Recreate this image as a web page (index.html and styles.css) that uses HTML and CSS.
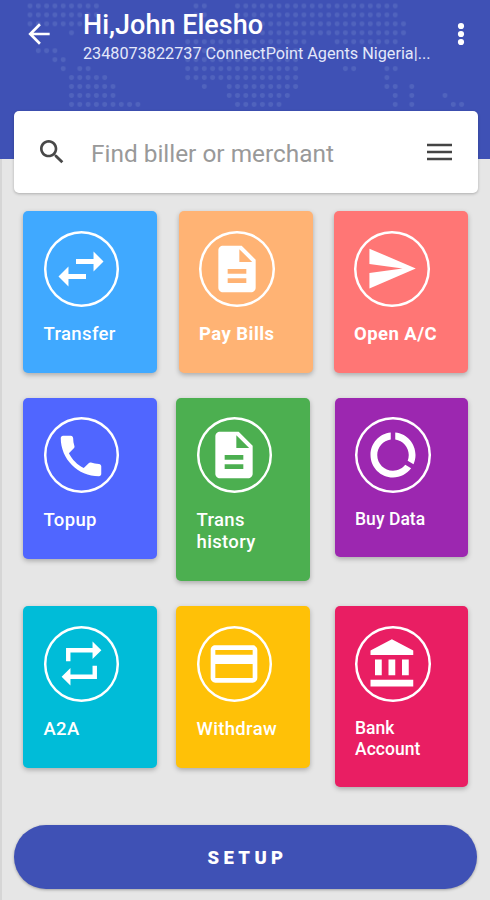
FILE: index.html
```
<!DOCTYPE html>
<html lang="en">
<head>
<meta charset="utf-8">
<title>Agent dashboard</title>
<link rel="stylesheet" href="styles.css">
</head>
<body>
<div class="screen">
  <header class="hero">
    <svg class="map" width="490" height="112" aria-hidden="true">
      <defs>
        <pattern id="dot" x="25.85" y="1.5" width="8.3" height="8.95" patternUnits="userSpaceOnUse">
          <circle cx="4.15" cy="4.5" r="2.4" fill="#5063bd"/>
        </pattern>
        <clipPath id="land">
          <path d="M0 0h9v2H0zM20 0h2v2h-2zM25 0h20v2H25zM0 2h7v1H0zM28 2h18v2H28zM5 3h1v1H5zM19 4h15v1H19zM37 4h8v1h-8zM1 5h3v1H1zM19 5h14v4H19zM3 6h2v1H3zM4 7h1v1H4zM6 7h2v1H6zM38 7h2v1h-2zM43 7h2v1h-2zM5 8h5v1H5zM43 8h1v1h-1zM5 9h6v2H5zM21 9h1v1h-1zM24 9h9v1h-9zM43 9h2v1h-2zM46 9h1v3h-1zM24 10h8v1h-8zM44 10h1v2h-1zM50 10h1v1h-1zM5 11h9v1H5zM25 11h6v1h-6zM51 11h2v1h-2z" transform="translate(25.85 1.5) scale(8.3 8.95)"/>
        </clipPath>
      </defs>
      <rect width="490" height="112" fill="url(#dot)" clip-path="url(#land)"/>
    </svg>
    <div class="bar">
      <svg class="back" viewBox="0 0 24 24"><path d="M20 11H7.83l5.59-5.59L12 4l-8 8 8 8 1.41-1.41L7.83 13H20v-2z"/></svg>
      <div class="who">
        <h1 class="name">Hi,John Elesho</h1>
        <p class="account">2348073822737 ConnectPoint Agents Nigeria|...</p>
      </div>
      <svg class="more" viewBox="0 0 8 24"><circle cx="4" cy="4" r="3.1"/><circle cx="4" cy="12" r="3.1"/><circle cx="4" cy="20" r="3.1"/></svg>
    </div>
  </header>

  <div class="search">
    <svg class="lens" viewBox="0 0 24 24"><path d="M15.5 14h-.79l-.28-.27C15.41 12.59 16 11.11 16 9.5 16 5.91 13.09 3 9.5 3S3 5.91 3 9.5 5.91 16 9.5 16c1.61 0 3.09-.59 4.23-1.57l.27.28v.79l5 4.99L20.49 19l-4.99-5zm-6 0C7.01 14 5 11.99 5 9.5S7.01 5 9.5 5 14 7.01 14 9.5 11.99 14 9.5 14z"/></svg>
    <span class="hint">Find biller or merchant</span>
    <svg class="menu" viewBox="0 0 25 18"><path d="M0 .8h25v2.400H0zM0 7.800h25v2.400H0zM0 14.800h25v2.400H0z"/></svg>
  </div>

  <main class="tiles">
    <div class="row row-first">
      <div class="tile transfer">
        <span class="ring"><svg class="i60" viewBox="0 0 24 24"><path d="M6.99 11L3 15l3.99 4v-3H14v-2H6.99v-3zM21 9l-3.99-4v3H10v2h7.01v3L21 9z"/></svg></span>
        <span class="label">Transfer</span>
      </div>
      <div class="tile bills">
        <span class="ring"><svg class="i56" viewBox="0 0 24 24"><path d="M14 2H6c-1.1 0-1.99.9-1.99 2L4 20c0 1.1.89 2 1.99 2H18c1.1 0 2-.9 2-2V8l-6-6zm2 16H8v-2h8v2zm0-4H8v-2h8v2zm-3-5V3.500L18.500 9H13z"/></svg></span>
        <span class="label heavy">Pay Bills</span>
      </div>
      <div class="tile open">
        <span class="ring"><svg class="i53" viewBox="0 0 24 24"><path d="M2.010 21L23 12 2.010 3 2 10l15 2-15 2z"/></svg></span>
        <span class="label heavy">Open A/C</span>
      </div>
    </div>
    <div class="row row-second">
      <div class="tile topup">
        <span class="ring"><svg class="i54 phone" viewBox="0 0 24 24"><path d="M6.620 10.790c1.440 2.830 3.760 5.140 6.590 6.590l2.200-2.200c.27-.27.67-.36 1.020-.24 1.120.37 2.330.57 3.570.57.550 0 1 .45 1 1V20c0 .55-.45 1-1 1-9.390 0-17-7.610-17-17 0-.55.450-1 1-1h3.500c.55 0 1 .45 1 1 0 1.250.2 2.450.57 3.570.110.35.030.74-.25 1.020l-2.200 2.200z"/></svg></span>
        <span class="label">Topup</span>
      </div>
      <div class="tile history">
        <span class="ring"><svg class="i56" viewBox="0 0 24 24"><path d="M14 2H6c-1.1 0-1.990.9-1.990 2L4 20c0 1.100.89 2 1.990 2H18c1.100 0 2-.9 2-2V8l-6-6zm2 16H8v-2h8v2zm0-4H8v-2h8v2zm-3-5V3.500L18.500 9H13z"/></svg></span>
        <span class="label">Trans<br>history</span>
      </div>
      <div class="tile data">
        <span class="ring"><svg class="i54" viewBox="0 0 24 24"><path d="M13 2.050v3.030c3.390.49 6 3.390 6 6.920 0 .9-.18 1.750-.48 2.540l2.600 1.530c.56-1.240.88-2.620.88-4.070 0-5.180-3.950-9.450-9-9.950zM12 19c-3.870 0-7-3.130-7-7 0-3.530 2.610-6.430 6-6.920V2.050c-5.060.5-9 4.760-9 9.950 0 5.520 4.470 10 9.990 10 3.310 0 6.240-1.610 8.060-4.090l-2.600-1.530C16.170 17.980 14.210 19 12 19z"/></svg></span>
        <span class="label small">Buy Data</span>
      </div>
    </div>
    <div class="row row-third">
      <div class="tile a2a">
        <span class="ring"><svg class="i53" viewBox="0 0 24 24"><path d="M7 7h10v3l4-4-4-4v3H5v6h2V7zm10 10H7v-3l-4 4 4 4v-3h12v-6h-2v4z"/></svg></span>
        <span class="label">A2A</span>
      </div>
      <div class="tile withdraw">
        <span class="ring"><svg class="i56" viewBox="0 0 24 24"><path d="M20 4H4c-1.110 0-1.990.89-1.990 2L2 18c0 1.110.89 2 2 2h16c1.110 0 2-.89 2-2V6c0-1.110-.89-2-2-2zm0 14H4v-6h16v6zm0-10H4V6h16v2z"/></svg></span>
        <span class="label">Withdraw</span>
      </div>
      <div class="tile bank">
        <span class="ring"><svg class="i54" viewBox="0 0 24 24"><path d="M4 10v7h3v-7H4zm6 0v7h3v-7h-3zM2 22h19v-3H2v3zm14-12v7h3v-7h-3zm-4.500-9L2 6v2h19V6l-9.500-5z"/></svg></span>
        <span class="label small">Bank<br>Account</span>
      </div>
    </div>
  </main>

  <button class="setup" type="button">SETUP</button>
</div>
</body>
</html>
```
FILE: styles.css
```
* { box-sizing: border-box; }
body {
  margin: 0;
  background: #e6e6e6;
  font-family: Roboto, "Liberation Sans", sans-serif;
}
svg { display: block; fill: #fff; flex: none; }
.screen {
  width: 490px;
  height: 900px;
  overflow: hidden;
  box-shadow: inset 2px 0 0 #d6d6d6;
}
.hero {
  position: relative;
  height: 159px;
  background: #3f51b5;
}
.map { position: absolute; inset: 0; }
.bar {
  position: relative;
  display: flex;
  align-items: flex-start;
  padding: 6px 25px 0 23px;
}
.back { width: 32px; height: 32px; margin-top: 12px; }
.who { flex: 1; margin-left: 28px; color: #fff; white-space: nowrap; }
.name { margin: 0; padding-top: 1px; font-size: 27px; line-height: 36px; font-weight: 500; }
.account { margin: 0; font-size: 16.230px; line-height: 22px; color: #e4e8fa; }
.more { width: 8px; height: 24px; margin-top: 16px; }

.search {
  position: relative;
  display: flex;
  align-items: center;
  height: 82px;
  margin: -48px 12px 0 14px;
  padding: 0 26px 0 22px;
  border-radius: 5px;
  background: #fff;
  box-shadow: 0 1px 3px rgba(0, 0, 0, .25);
}
.lens { width: 32px; height: 32px; fill: #484848; }
.hint { flex: 1; margin-left: 23px; padding-top: 2px; font-size: 24.400px; color: #999; white-space: nowrap; }
.menu { width: 25px; height: 18px; fill: #444; }

.tiles { padding-top: 18px; }
.row { display: flex; align-items: flex-start; padding-left: 23px; }
.row-first { height: 187px; gap: 21.500px; }
.row-second { height: 208px; }
.row-third { height: 219px; }
.tile {
  width: 134px;
  height: 162px;
  padding: 20px 0 0 20.500px;
  border-radius: 5px;
  color: #fff;
  box-shadow: 0 2px 5px rgba(0, 0, 0, .26);
}
.row-second .tile { padding-top: 19px; }
.ring {
  display: flex;
  align-items: center;
  justify-content: center;
  width: 75.500px;
  height: 75.500px;
  border-radius: 50%;
  box-shadow: inset 0 0 0 2.500px #fff;
}
.i53 { width: 53px; height: 53px; }
.i54 { width: 54px; height: 54px; }
.i56 { width: 56px; height: 56px; }
.i60 { width: 60px; height: 60px; }
.phone { margin-top: 3px; }
.label {
  display: block;
  margin-top: 16.500px;
  font-size: 18.500px;
  line-height: 22px;
  font-weight: 500;
  letter-spacing: .35px;
}
.heavy { font-weight: 700; letter-spacing: .45px; }
.small { font-size: 17.500px; line-height: 21px; letter-spacing: .05px; }
.transfer { background: #40a9ff; }
.bills { background: #ffb374; }
.open { padding-left: 20px; background: #ff7675; }
.topup { height: 161px; background: #5066ff; }
.history { height: 183px; margin-left: 19px; background: #4caf50; }
.data { width: 133px; height: 159px; margin-left: 25px; padding-left: 20px; background: #9c27b0; }
.a2a { background: #00bcd8; }
.withdraw { margin-left: 19px; background: #ffc107; }
.bank { width: 133px; height: 181px; margin-left: 25px; padding-left: 20px; background: #e91e63; }

.setup {
  display: block;
  width: 463px;
  height: 64px;
  margin-left: 14px;
  padding: 2px 0 0 4px;
  border: 0;
  border-radius: 32px;
  background: #3f51b5;
  box-shadow: 0 1px 3px rgba(0, 0, 0, .3);
  color: #fff;
  font: 900 18.500px/62px Roboto, sans-serif;
  letter-spacing: 4.400px;
}
```
